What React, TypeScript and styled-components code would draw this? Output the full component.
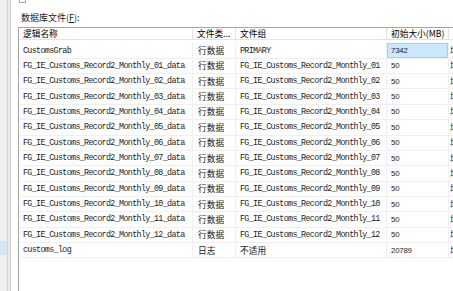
import * as React from "react";
import styled, { createGlobalStyle, css } from "styled-components";

const GlobalStyle = createGlobalStyle`
  html, body {
    margin: 0;
    padding: 0;
    background: #ffffff;
  }
  body {
    font-family: "Noto Sans CJK SC", "Liberation Sans", sans-serif;
    color: #000;
  }
`;

const SFrame = styled.div`
  display: flex;
  width: 453px;
  height: 291px;
  overflow: hidden;
  background: #ffffff;
`;

const SNavPane = styled.div`
  flex: none;
  width: 7px;
  display: flex;
  flex-direction: column;
  padding-top: 241px;
  background: #f0f0f0;
`;

const SNavSelected = styled.div`
  height: 14px;
  background: #d3e5f6;
`;

const SSplitter = styled.div`
  flex: none;
  width: 2px;
  background: #e9e9e9;
  border-left: 1px solid #d2d2d2;
  border-right: 1px solid #d2d2d2;
`;

const SContent = styled.div`
  flex: 1;
  min-width: 0;
  padding-left: 7px;
  overflow: hidden;
  display: flex;
  flex-direction: column;
`;

const SCheckStub = styled.div`
  flex: none;
  width: 5px;
  height: 2px;
  margin-left: 1px;
  border: 1px solid #a8a8a8;
  border-top: none;
`;

const SLabel = styled.div`
  flex: none;
  margin-top: 9px;
  margin-bottom: 3px;
  padding-left: 3px;
  font-size: 9px;
  line-height: 12px;
  color: #1a1a1a;
  white-space: nowrap;

  & u {
    text-decoration: underline;
  }
`;

const SGrid = styled.div`
  flex: 1;
  display: grid;
  grid-template-columns: 174px 43px 151px 62px 140px;
  grid-auto-rows: 15.36px;
  align-content: start;
  width: max-content;
  border-top: 1px solid #a5a5a5;
  border-left: 1px solid #a5a5a5;
`;

const SHeadCell = styled.div`
  display: flex;
  align-items: center;
  height: 12px;
  padding-left: 4px;
  font-size: 8.7px;
  color: #000;
  white-space: nowrap;
  overflow: hidden;
  border-right: 1px solid #e3e3e3;
  border-bottom: 1px solid #e3e3e3;
  box-sizing: border-box;
`;

type Kind = "mono" | "cjk" | "num";

const kindStyles = {
  mono: css`
    font-family: "Liberation Mono", monospace;
    font-size: 8.4px;
    letter-spacing: -0.66px;
    color: #1c1c1c;
  `,
  cjk: css`
    font-family: "Noto Sans CJK SC", sans-serif;
    font-size: 8.7px;
    color: #1a1a1a;
  `,
  num: css`
    font-family: "Liberation Sans", sans-serif;
    font-size: 7.8px;
    letter-spacing: -0.2px;
    color: #1a1a1a;
  `,
};

const SCell = styled.div<{ $kind: Kind; $selected?: boolean; $pad?: number }>`
  display: flex;
  align-items: center;
  padding-left: ${(p) => p.$pad ?? 4}px;
  white-space: nowrap;
  overflow: hidden;
  box-sizing: border-box;
  border-right: 1px solid #f0f0f0;
  border-bottom: 1px solid #f0f0f0;
  ${(p) => kindStyles[p.$kind]}
  ${(p) =>
    p.$selected &&
    css`
      background: #cce8ff;
      box-shadow: inset 0 0 0 1px #99d1ff;
    `}
`;

interface FileRow {
  name: string;
  type: string;
  group: string;
  groupKind: Kind;
  size: string;
  growth: string;
  selected?: boolean;
}

const monthly = Array.from({ length: 12 }, (_, i) => {
  const nn = String(i + 1).padStart(2, "0");
  return {
    name: `FG_IE_Customs_Record2_Monthly_${nn}_data`,
    type: "行数据",
    group: `FG_IE_Customs_Record2_Monthly_${nn}`,
    groupKind: "mono" as Kind,
    size: "50",
    growth: "增量为 64 MB，增长无限制",
  };
});

const rows: FileRow[] = [
  {
    name: "CustomsGrab",
    type: "行数据",
    group: "PRIMARY",
    groupKind: "mono",
    size: "7342",
    growth: "增量为 64 MB，增长无限制",
    selected: true,
  },
  ...monthly,
  {
    name: "customs_log",
    type: "日志",
    group: "不适用",
    groupKind: "cjk",
    size: "20789",
    growth: "增量为 64 MB，限制为 2097152 MB",
  },
];

const headers = ["逻辑名称", "文件类...", "文件组", "初始大小(MB)", "自动增长/最大大小"];

const App = () => {
  return (
    <>
      <GlobalStyle />
      <SFrame>
        <SNavPane>
          <SNavSelected />
        </SNavPane>
        <SSplitter />
        <SContent>
          <SCheckStub />
          <SLabel>
            数据库文件(<u>F</u>):
          </SLabel>
          <SGrid>
            {headers.map((h) => (
              <SHeadCell key={h}>{h}</SHeadCell>
            ))}
            {rows.map((r) => (
              <React.Fragment key={r.name}>
                <SCell $kind="mono">{r.name}</SCell>
                <SCell $kind="cjk" $pad={5}>
                  {r.type}
                </SCell>
                <SCell $kind={r.groupKind}>{r.group}</SCell>
                <SCell $kind="num" $selected={r.selected}>
                  {r.size}
                </SCell>
                <SCell $kind="cjk" $pad={1}>
                  {r.growth}
                </SCell>
              </React.Fragment>
            ))}
          </SGrid>
        </SContent>
      </SFrame>
    </>
  );
};

export default App;
